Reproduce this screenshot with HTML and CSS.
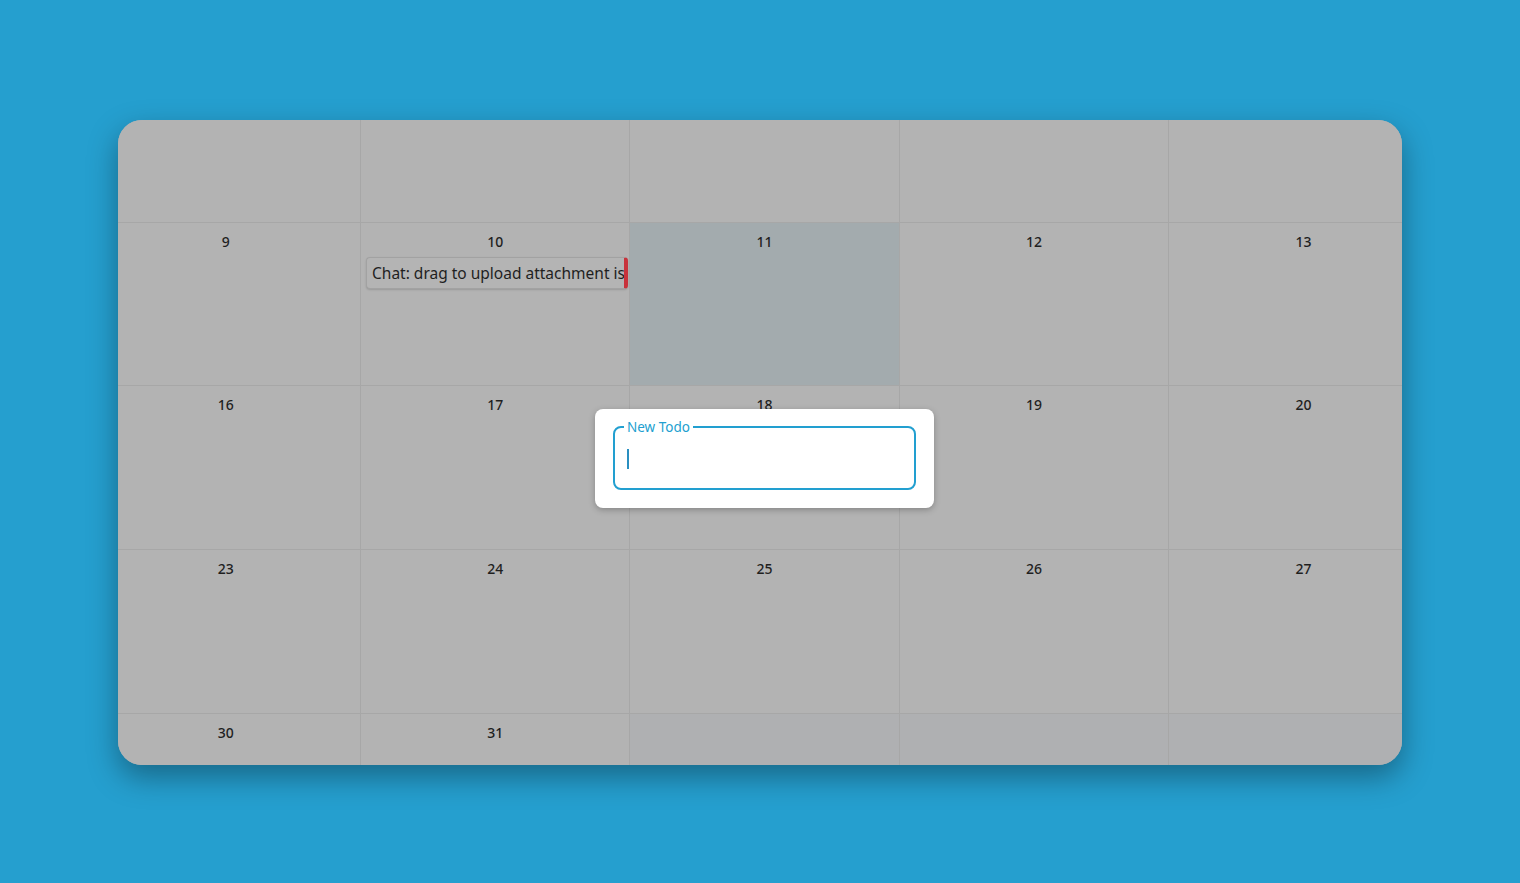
FILE: index.html
```html
<!DOCTYPE html>
<html lang="en">
<head>
<meta charset="utf-8">
<title>Calendar</title>
<link rel="stylesheet" href="styles.css">
</head>
<body>
<main class="card">
  <div class="grid">
    <div class="cell"></div>
    <div class="cell"></div>
    <div class="cell"></div>
    <div class="cell"></div>
    <div class="cell"></div>

    <div class="cell"><span class="num">9</span></div>
    <div class="cell"><span class="num">10</span>
      <div class="event">Chat: drag to upload attachment is not working</div>
    </div>
    <div class="cell today"><span class="num">11</span></div>
    <div class="cell"><span class="num">12</span></div>
    <div class="cell"><span class="num">13</span></div>

    <div class="cell"><span class="num">16</span></div>
    <div class="cell"><span class="num">17</span></div>
    <div class="cell"><span class="num">18</span></div>
    <div class="cell"><span class="num">19</span></div>
    <div class="cell"><span class="num">20</span></div>

    <div class="cell"><span class="num">23</span></div>
    <div class="cell"><span class="num">24</span></div>
    <div class="cell"><span class="num">25</span></div>
    <div class="cell"><span class="num">26</span></div>
    <div class="cell"><span class="num">27</span></div>

    <div class="cell"><span class="num">30</span></div>
    <div class="cell"><span class="num">31</span></div>
    <div class="cell other"></div>
    <div class="cell other"></div>
    <div class="cell other"></div>
  </div>
</main>

<div class="modal">
  <div class="field">
    <span class="legend">New Todo</span>
    <span class="caret"></span>
  </div>
</div>
</body>
</html>
```

FILE: styles.css
```css
html, body {
  margin: 0;
  padding: 0;
}
body {
  width: 1520px;
  height: 883px;
  box-sizing: border-box;
  padding: 120px 118px 0 118px;
  background: #259fcf;
  font-family: "Noto Sans", "Open Sans", sans-serif;
  color: #1f1f1f;
  overflow: hidden;
}
.card {
  width: 1284px;
  height: 645px;
  border-radius: 24px;
  overflow: hidden;
  background: #b3b3b3;
  box-shadow: 0 12px 30px rgba(0, 0, 0, 0.35);
}
.grid {
  margin: -61px 0 0 -26.4px;
  width: 1347px;
  display: grid;
  grid-template-columns: repeat(5, 1fr);
  grid-auto-rows: 163.7px;
}
.cell {
  box-sizing: border-box;
  border-right: 1px solid #a7a7a7;
  border-bottom: 1px solid #a7a7a7;
  background: #b3b3b3;
  padding-top: 9px;
  display: flex;
  flex-direction: column;
  align-items: center;
}
.cell.today {
  background: #a3abae;
}
.cell.other {
  background: #afb0b2;
}
.num {
  font-size: 14px;
  font-weight: 500;
  line-height: 20px;
  color: #1f1f1f;
}
.event {
  align-self: flex-start;
  margin: 5px 0 0 5px;
  width: 262px;
  height: 32px;
  box-sizing: border-box;
  padding: 0 4px 0 5px;
  border: 1px solid #a2a2a2;
  border-right: 4px solid #c8323b;
  border-radius: 4px;
  background: #b4b4b4;
  box-shadow: 0 1px 2px rgba(0, 0, 0, 0.15);
  font-size: 15.5px;
  line-height: 30px;
  white-space: nowrap;
  overflow: hidden;
  color: #1f1f1f;
}
.modal {
  position: absolute;
  left: 595px;
  top: 409px;
  width: 339px;
  height: 99px;
  box-sizing: border-box;
  padding: 17px 18px 18px 18px;
  background: #ffffff;
  border-radius: 8px;
  box-shadow: 0 2px 6px rgba(0, 0, 0, 0.25);
}
.field {
  position: relative;
  height: 64px;
  box-sizing: border-box;
  border: 2px solid #229fd0;
  border-radius: 8px;
  padding: 0 12px;
  display: flex;
  align-items: center;
}
.legend {
  position: absolute;
  left: 9px;
  top: -9px;
  padding: 0 3px;
  background: #ffffff;
  font-size: 13.5px;
  line-height: 16px;
  color: #229fd0;
}
.caret {
  display: block;
  width: 1.5px;
  height: 20px;
  margin-top: 2px;
  background: #2a8fc0;
}
```
